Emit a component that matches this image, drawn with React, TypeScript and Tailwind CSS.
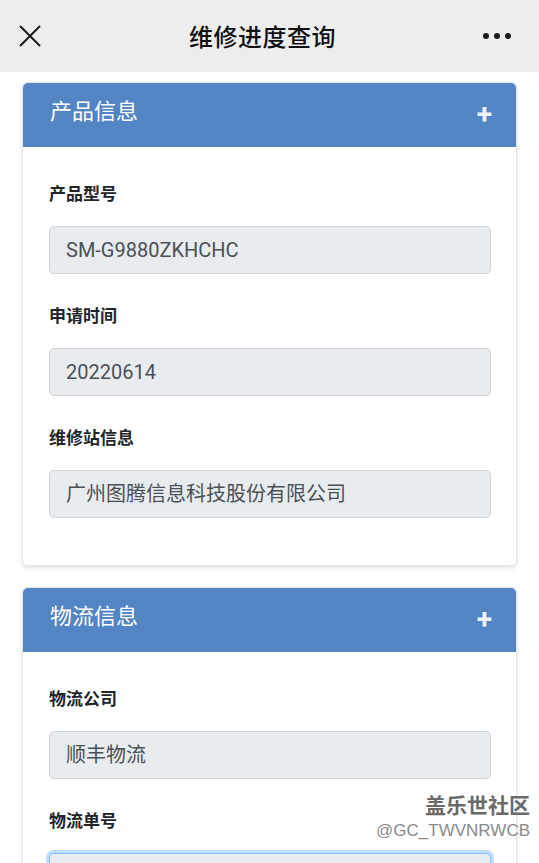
import React from 'react';

const sections = [
  {
    title: '产品信息',
    fields: [
      { label: '产品型号', value: 'SM-G9880ZKHCHC' },
      { label: '申请时间', value: '20220614' },
      { label: '维修站信息', value: '广州图腾信息科技股份有限公司' },
    ],
  },
  {
    title: '物流信息',
    fields: [
      { label: '物流公司', value: '顺丰物流' },
      { label: '物流单号', value: '', focused: true },
    ],
  },
];

const font = "font-['Roboto','Noto_Sans_CJK_SC',sans-serif]";

const Field = ({ label, value, focused }: { label: string; value: string; focused?: boolean }) => (
  <div className="mb-[30px]">
    <div className="text-[17px] leading-[24px] font-bold text-[#212529] mb-[20px]">{label}</div>
    <div
      className={`h-[48px] rounded-[5px] border bg-[#e9ecef] px-[16px] flex items-center text-[20px] text-[#495057] ${
        focused ? 'border-[#80bdff] shadow-[0_0_0_3px_rgba(0,123,255,0.25)]' : 'border-[#ced4da]'
      }`}
    >
      {value}
    </div>
  </div>
);

const App = () => {
  return (
    <div className={`relative w-[539px] h-[863px] overflow-hidden bg-white ${font}`}>
      {/* top bar */}
      <div className="h-[72px] bg-[#ededed] flex items-center justify-between px-[18px]">
        <svg width="24" height="24" viewBox="0 0 24 24" className="text-[#1a1a1a]">
          <path d="M2 2 L22 22 M22 2 L2 22" stroke="currentColor" strokeWidth="2" fill="none" />
        </svg>
        <div className="text-[24px] font-medium text-[#111] tracking-[0.5px] pt-[3px]">维修进度查询</div>
        <div className="flex gap-[5px] pr-[10px]">
          <span className="w-[6px] h-[6px] rounded-full bg-[#1a1a1a]" />
          <span className="w-[6px] h-[6px] rounded-full bg-[#1a1a1a]" />
          <span className="w-[6px] h-[6px] rounded-full bg-[#1a1a1a]" />
        </div>
      </div>

      <div className="px-[22px] pt-[10px] flex flex-col gap-[21px]">
        {sections.map((s) => (
          <div
            key={s.title}
            className="w-[495px] rounded-[5px] border border-[#e6e6e6] bg-white shadow-[0_2px_4px_rgba(0,0,0,0.12)]"
          >
            <div className="h-[64px] bg-[#5384c4] rounded-t-[5px] flex items-center justify-between pl-[27px] pr-[24px]">
              <span className="text-[22px] text-white mb-[8px]">{s.title}</span>
              <span className="text-[28px] font-bold text-[#eef3fb] leading-none">+</span>
            </div>
            <div className="pt-[35px] pb-[17px] pl-[26px] pr-[25px]">
              {s.fields.map((f) => (
                <Field key={f.label} label={f.label} value={f.value} focused={f.focused} />
              ))}
            </div>
          </div>
        ))}
      </div>

      {/* watermark */}
      <div className="absolute right-[9px] top-[792px] flex flex-col items-end pointer-events-none">
        <span className="text-[21px] font-bold leading-[28px] text-[#6b6b6b]">盖乐世社区</span>
        <span className="text-[17px] leading-[22px] text-[#8a8a8a] font-['Liberation_Sans',sans-serif]">@GC_TWVNRWCB</span>
      </div>
    </div>
  );
};

export default App;
